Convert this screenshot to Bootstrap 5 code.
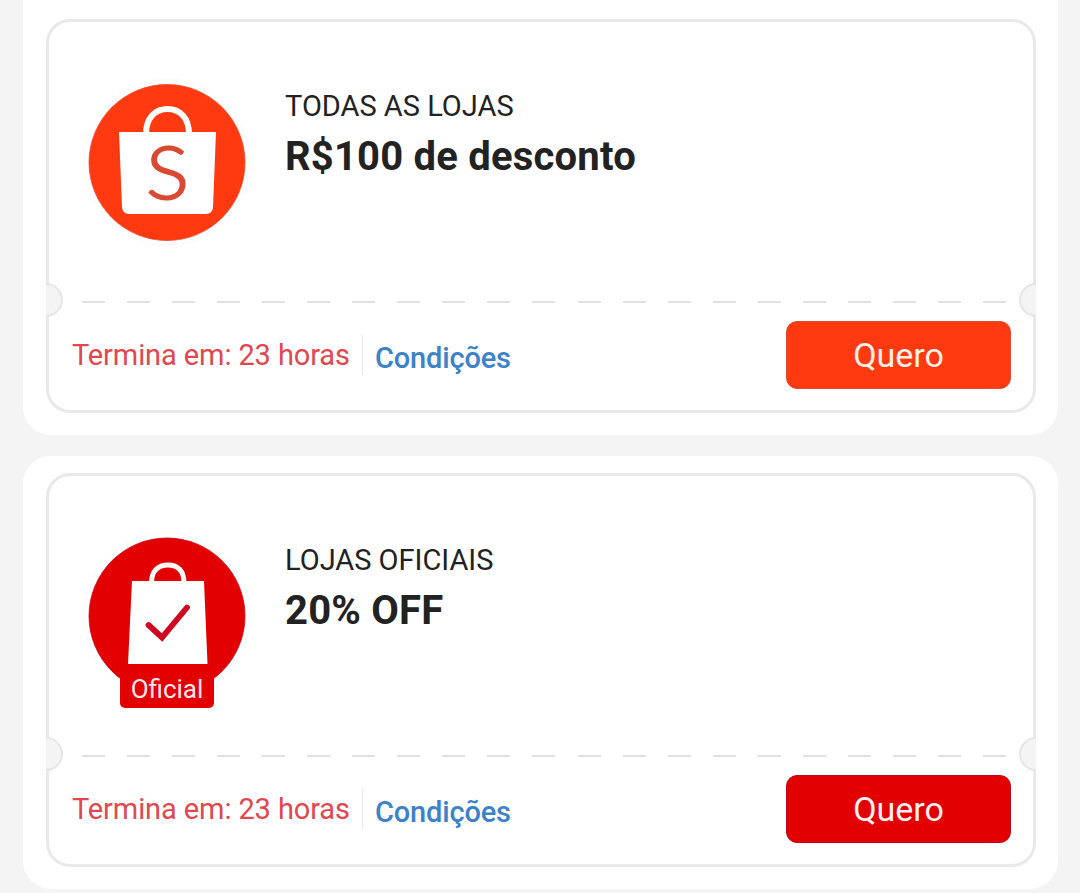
<!DOCTYPE html>
<html lang="pt-BR">
<head>
<meta charset="utf-8">
<meta name="viewport" content="width=device-width, initial-scale=1">
<title>Cupons</title>
<link href="https://cdn.jsdelivr.net/npm/bootstrap@5.3.0/dist/css/bootstrap.min.css" rel="stylesheet">
<style>
body{background:#f4f4f4;font-family:Roboto,"Liberation Sans",sans-serif;color:#222;overflow:hidden}
.coupon-list{padding:0 22px 4px 23px;gap:21px;height:893px}
.panel{background:#fff;border-radius:28px;padding:17px 22px 22px 23px}
.panel:first-child{border-top-left-radius:0;border-top-right-radius:0;padding-top:19px}
.ticket{height:394px;border:3px solid #e9e9e9;border-radius:24px;background:#fff}
.offer{height:262px;padding:56px 0 0 34px;gap:32px}
.offer-logo{width:170px;height:180px;flex:none}
.offer-text{padding-top:12px}
.scope{font-size:29px;line-height:32px;letter-spacing:-.01px}
.amount{font-size:40px;line-height:48px;font-weight:700;margin-top:11px;letter-spacing:.2px}
.tear{height:33px;margin:0 -3px}
.notch{width:17px;height:34px;background:#f4f4f4;border:2px solid #e6e6e6;margin-top:-1px}
.notch-l{border-left:0;border-radius:0 17px 17px 0}
.notch-r{border-right:0;border-radius:17px 0 0 17px}
.dashes{height:2px;margin:3px 13px 0 19px;background:repeating-linear-gradient(90deg,#e0e0e0 0 23px,transparent 23px 45.05px)}
.foot{padding:4px 22px 0 23px}
.ends{font-size:29px;line-height:34px;color:#e0484f;letter-spacing:-.1px}
.rule{width:1px;height:40px;background:#e8e8e8;margin:0 12px}
.terms{font-size:29px;line-height:34px;font-weight:500;color:#3b82c8;letter-spacing:-.15px;margin-top:6px}
.btn-want{width:225px;height:68px;border-radius:11px;font-size:34px;line-height:1;color:#fff0e8;padding:0;border:1px solid}
.btn-all,.btn-all:hover{background:#ff3a10;border-color:#e04a30;color:#fff0e8}
.btn-official,.btn-official:hover{background:#e20000;border-color:#bd0820;color:#fff0f4}
</style>
</head>
<body>
<main class="coupon-list d-flex flex-column">
  <section class="panel">
    <article class="ticket">
      <div class="offer d-flex align-items-start">
        <svg class="offer-logo" viewBox="83 78 170 180" aria-hidden="true">
          <circle cx="167" cy="162" r="83" fill="none" stroke="#fafafa"/>
          <circle cx="167" cy="162.500" r="78" fill="#ff3a10" stroke="#ee4a2c" stroke-width=".8"/>
          <path d="M146 134C146 118 155 109 167.500 109S189 118 189 134" fill="none" stroke="#fff" stroke-width="6"/>
          <path d="M119 132H216L213 207Q212.500 214 206 214H129Q122.500 214 122 207Z" fill="#fff"/>
          <text transform="translate(167.500 199.200) scale(1.1 1)" text-anchor="middle" font-family="Lato" font-weight="300" font-size="73" fill="#d94a32" stroke="#d94a32" stroke-width="1.900" stroke-linejoin="round">S</text>
        </svg>
        <div class="offer-text">
          <div class="scope"><span>TODAS AS LOJAS</span></div>
          <div class="amount"><span>R$100 de desconto</span></div>
        </div>
      </div>
      <div class="tear d-flex align-items-center">
        <span class="notch notch-l"></span><span class="dashes flex-grow-1"></span><span class="notch notch-r"></span>
      </div>
      <div class="foot d-flex align-items-center">
        <span class="ends">Termina em: 23 horas</span><span class="rule"></span>
        <a href="#" class="terms text-decoration-none">Condições</a>
        <button class="btn btn-want btn-all ms-auto">Quero</button>
      </div>
    </article>
  </section>
  <section class="panel">
    <article class="ticket">
      <div class="offer d-flex align-items-start">
        <svg class="offer-logo" viewBox="83 532 170 180">
          <circle cx="167" cy="616" r="83" fill="none" stroke="#fafafa"/>
          <path d="M115 676H220V712H115Z" fill="#fff"/>
          <circle cx="167" cy="616" r="78" fill="#e20000" stroke="#c8081c" stroke-width=".8"/>
          <rect x="120" y="671" width="94" height="37" rx="5" fill="#e20000"/>
          <path d="M151.500 583C151.500 571 158 565 168 565S184 571 184 583" fill="none" stroke="#fff" stroke-width="5"/>
          <path d="M132 581H204L207.500 664H128Z" fill="#fff"/>
          <path d="M148.500 625L162 637.500L187 607.500" fill="none" stroke="#cf0820" stroke-width="5.800" stroke-linecap="round"/>
          <text x="167" y="698" text-anchor="middle" font-family="Roboto" font-size="26" fill="#ffe6ec">Oficial</text>
        </svg>
        <div class="offer-text">
          <div class="scope"><span>LOJAS OFICIAIS</span></div>
          <div class="amount"><span>20% OFF</span></div>
        </div>
      </div>
      <div class="tear d-flex align-items-center">
        <span class="notch notch-l"></span><span class="dashes flex-grow-1"></span><span class="notch notch-r"></span>
      </div>
      <div class="foot d-flex align-items-center">
        <span class="ends">Termina em: 23 horas</span><span class="rule"></span>
        <a href="#" class="terms text-decoration-none">Condições</a>
        <button class="btn btn-want btn-official ms-auto">Quero</button>
      </div>
    </article>
  </section>
</main>
<script src="https://cdn.jsdelivr.net/npm/bootstrap@5.3.0/dist/js/bootstrap.bundle.min.js"></script>
</body>
</html>
